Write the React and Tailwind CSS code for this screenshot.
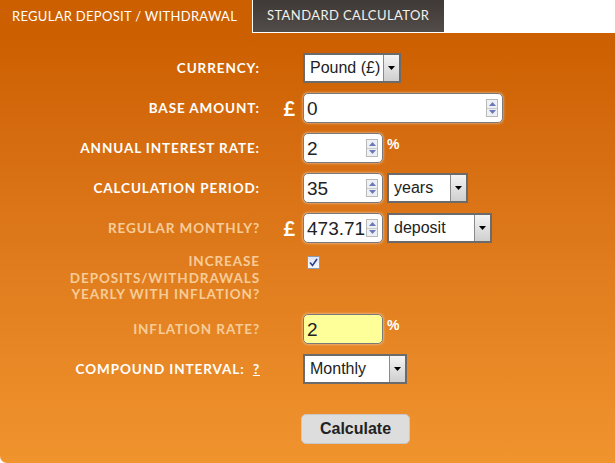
import { useState } from 'react';

const labelFont = { fontFamily: 'Lato, "Open Sans", sans-serif' };
const arial = { fontFamily: '"Liberation Sans", Arial, sans-serif' };

// small up/down spinner drawn inside number inputs
function Spinner() {
  return (
    <div className="flex flex-col w-[12px] h-[18px] border border-[#b9b9b9] bg-[#eef0f4]">
      <div className="flex-1 flex items-center justify-center border-b border-[#c9c9c9]">
        <svg width="7" height="4" viewBox="0 0 7 4"><path d="M0 4 L3.5 0 L7 4 Z" fill="#6a7ab8" /></svg>
      </div>
      <div className="flex-1 flex items-center justify-center">
        <svg width="7" height="4" viewBox="0 0 7 4"><path d="M0 0 L3.5 4 L7 0 Z" fill="#6a7ab8" /></svg>
      </div>
    </div>
  );
}

function NumberBox({ value, width = 'w-[80px]', yellow = false }) {
  return (
    <div
      className={`${width} h-[30px] rounded-[5px] border border-[#7a7a7a] shadow-[0_0_3px_rgba(255,255,255,0.7)] flex items-center pl-[3px] pr-[4px] ${yellow ? 'bg-[#ffff99]' : 'bg-white'}`}
    >
      <span className="flex-1 text-[19px] text-[#222] leading-none overflow-hidden whitespace-nowrap" style={arial}>{value}</span>
      {!yellow && <Spinner />}
    </div>
  );
}

function SelectBox({ value, width }) {
  return (
    <div className={`${width} h-[30px] bg-white border-2 border-[#6b6b6b] flex items-stretch`}>
      <span className="flex-1 flex items-center pl-[5px] text-[16px] text-[#222]" style={arial}>{value}</span>
      <div className="w-[16px] border-l border-[#8a8a8a] bg-gradient-to-b from-[#f4f4f4] to-[#cfcfcf] flex items-center justify-center">
        <svg width="7" height="4" viewBox="0 0 7 4"><path d="M0 0 L3.5 4 L7 0 Z" fill="#000" /></svg>
      </div>
    </div>
  );
}

function Row({ label, pound, dim, children, className = 'h-[30px] items-center' }) {
  return (
    <div className={`flex ${className}`}>
      <div
        className={`w-[260px] text-right text-[13.5px] leading-[16.5px] font-bold uppercase tracking-[0.9px] ${dim ? 'text-[#f7cc98]' : 'text-white'}`}
        style={labelFont}
      >
        {label}
      </div>
      <div className="w-[43px] flex justify-end pr-[8px] text-white text-[20px] font-bold" style={labelFont}>
        {pound ? '£' : ''}
      </div>
      <div className="flex items-center gap-[4px]">{children}</div>
    </div>
  );
}

export default function App() {
  const [tab] = useState('regular');

  return (
    <div className="w-[615px] h-[463px] bg-white overflow-hidden flex flex-col">
      {/* TABS */}
      <div className="flex h-[33px]">
        <div
          className={`w-[252px] h-[33px] flex items-center pl-[12px] text-[13px] tracking-[0.3px] text-white ${tab === 'regular' ? 'bg-[#cc5f00]' : ''}`}
          style={labelFont}
        >
          REGULAR DEPOSIT / WITHDRAWAL
        </div>
        <div
          className="w-[192px] h-[33px] border-l border-b border-white bg-gradient-to-b from-[#3f3a36] to-[#524c4a] flex items-center pl-[14px] text-[13px] tracking-[0.4px] text-[#f4f0ea]"
          style={labelFont}
        >
          STANDARD CALCULATOR
        </div>
      </div>

      {/* PANEL */}
      <div className="flex-1 rounded-bl-[7px] bg-gradient-to-b from-[#cc5f00] to-[#f0942e] pt-[20px] flex flex-col gap-[10px]">
        <Row label="Currency:">
          <SelectBox value="Pound (£)" width="w-[98px]" />
        </Row>
        <Row label="Base amount:" pound>
          <NumberBox value="0" width="w-[200px]" />
        </Row>
        <Row label="Annual interest rate:">
          <NumberBox value="2" />
          <span className="text-white font-bold text-[14px] self-start mt-[1px]" style={arial}>%</span>
        </Row>
        <Row label="Calculation period:">
          <NumberBox value="35" />
          <SelectBox value="years" width="w-[81px]" />
        </Row>
        <Row label="Regular monthly?" pound dim>
          <NumberBox value="473.71" />
          <SelectBox value="deposit" width="w-[105px]" />
        </Row>
        <Row label={<>Increase<br />deposits/withdrawals<br />yearly with inflation?</>} dim className="h-[51px] items-start">
          <div className="ml-[4px] mt-[3px] w-[13px] h-[13px] border border-[#8e9bb6] bg-gradient-to-b from-[#dfe6f2] to-[#f6f8fb] flex items-center justify-center">
            <svg width="9" height="9" viewBox="0 0 9 9"><path d="M1 4.5 L3.5 7.5 L8 1" stroke="#2d3f8c" strokeWidth="1.6" fill="none" /></svg>
          </div>
        </Row>
        <Row label="Inflation rate?" dim>
          <NumberBox value="2" yellow />
          <span className="text-white font-bold text-[14px] self-start mt-[1px]" style={arial}>%</span>
        </Row>
        <Row label={<>Compound interval:&nbsp; <span className="underline">?</span></>}>
          <SelectBox value="Monthly" width="w-[104px]" />
        </Row>
        <div className="flex pl-[301px] mt-[20px]">
          <button
            className="w-[109px] h-[30px] rounded-[5px] bg-[#dddddd] border border-[#c8c8c8] text-[16px] font-bold text-[#222]"
            style={arial}
          >
            Calculate
          </button>
        </div>
      </div>
    </div>
  );
}
